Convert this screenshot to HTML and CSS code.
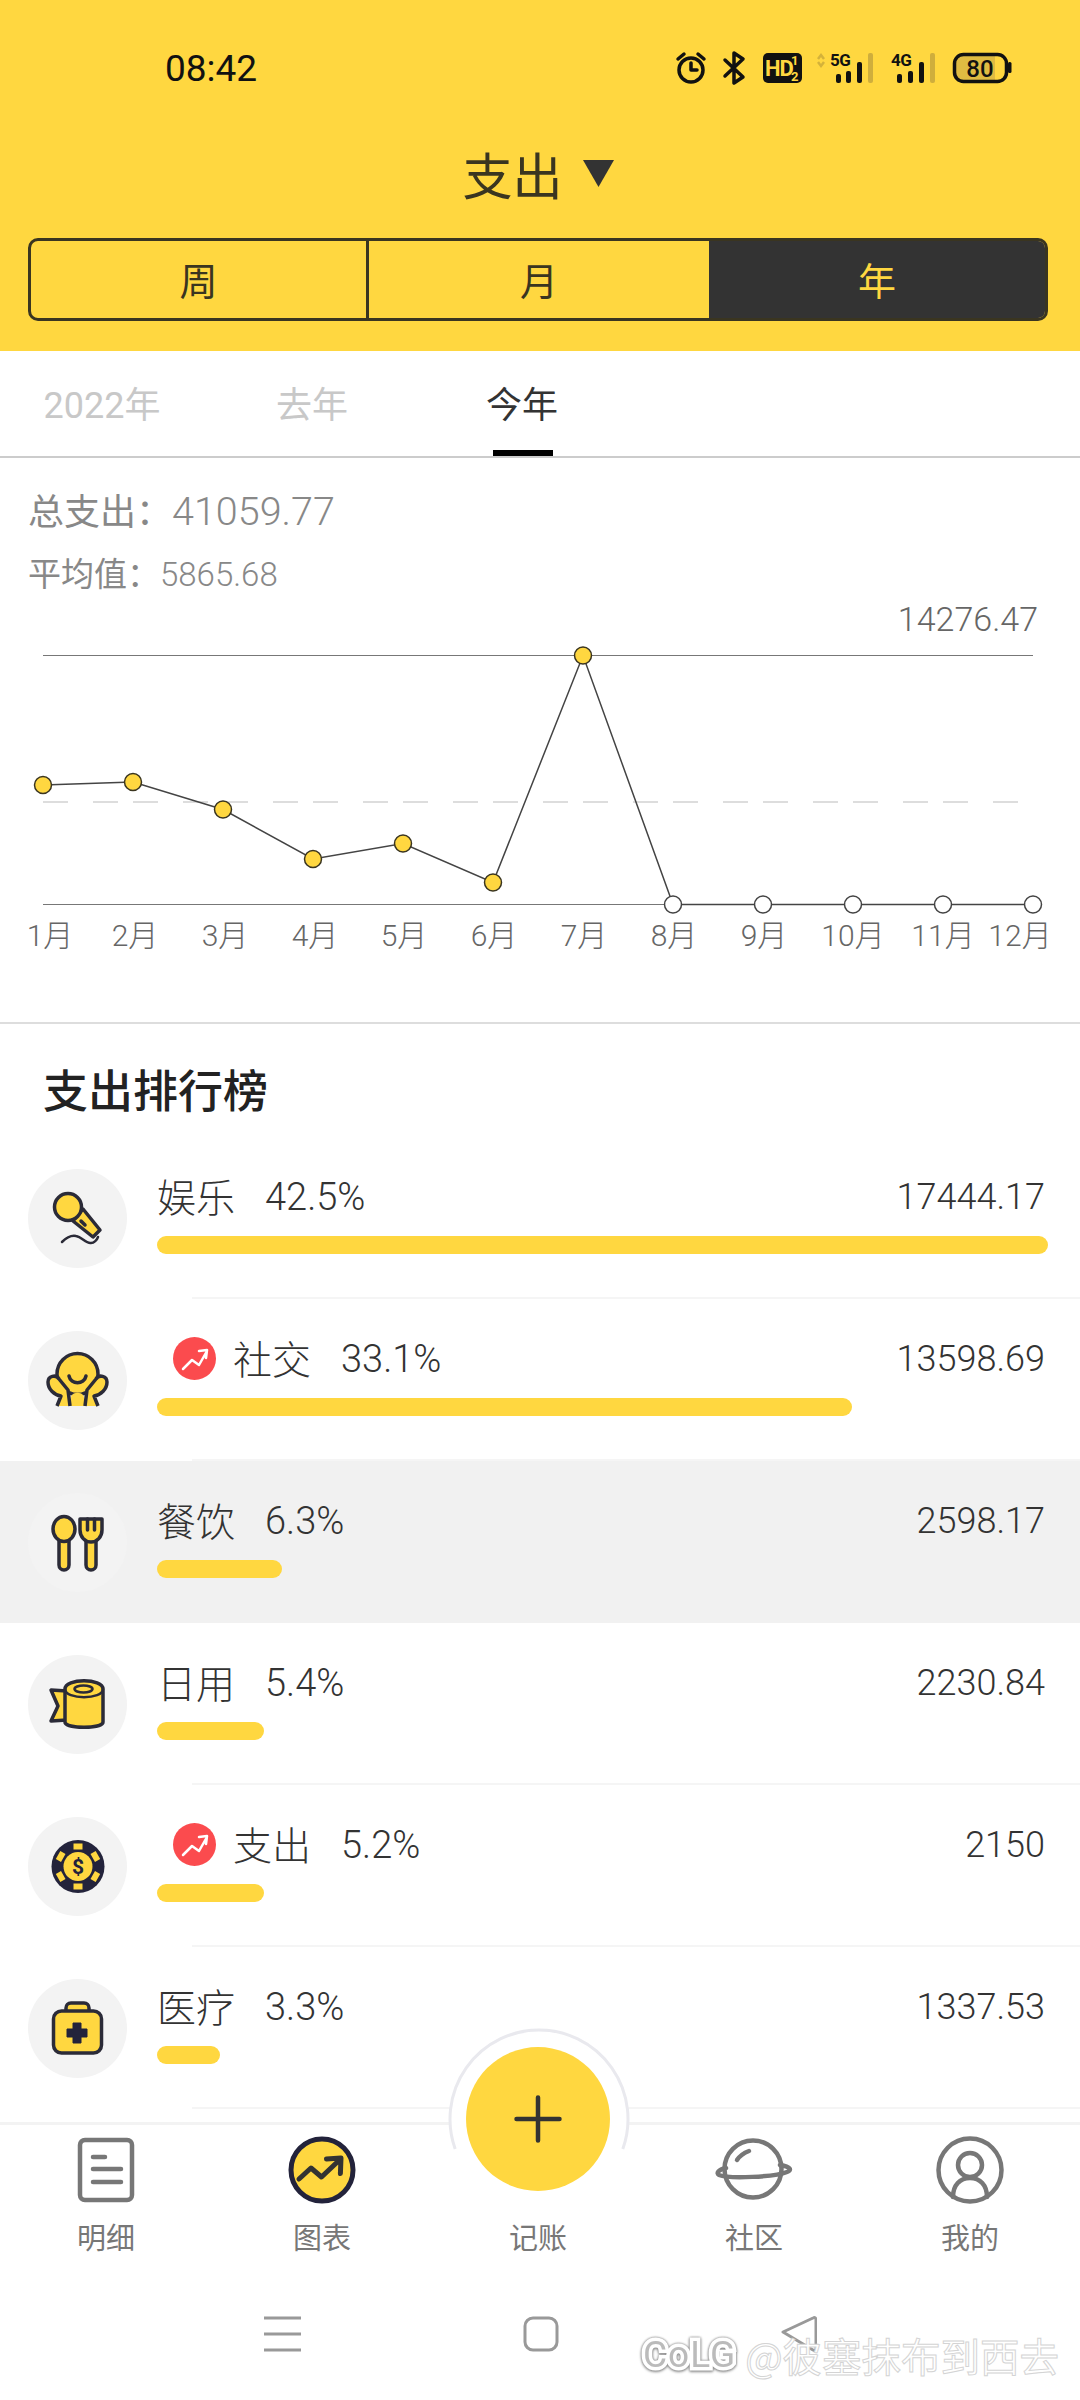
FILE: index.html
```html
<!DOCTYPE html>
<html lang="zh-CN">
<head>
<meta charset="utf-8">
<title>支出图表</title>
<link rel="stylesheet" href="styles.css">
</head>
<body>
<div class="page">
  <header class="header">
    <div class="status">
      <span class="time">08:42</span>
      <svg class="status-icons" viewBox="670 50 345 36" width="345" height="36">
        <g class="s-line">
          <circle cx="691" cy="70" r="12"/>
          <path d="M691 63v7h6"/>
          <path d="M678 59l6-5M704 59l-6-5"/>
          <path d="M725 60l18 17-9 6V53l9 6-18 17"/>
        </g>
        <rect x="763" y="53" width="39" height="30" rx="5" class="s-fill"/>
        <text x="765" y="76" class="s-hd">HD</text>
        <text x="791" y="65" class="s-hd-small">1</text>
        <text x="791" y="81" class="s-hd-small">2</text>
        <path d="M818 59l3-4 3 4M818 62l3 4 3-4" class="s-faint"/>
        <text x="830" y="66" class="s-net">5G</text>
        <rect x="836" y="74" width="5" height="9" rx="2" class="s-fill"/>
        <rect x="846" y="71" width="5" height="12" rx="2" class="s-fill"/>
        <rect x="857" y="62" width="5" height="21" rx="2" class="s-fill"/>
        <rect x="868" y="53" width="5" height="30" rx="2" class="s-dim"/>
        <text x="891" y="66" class="s-net">4G</text>
        <rect x="897" y="74" width="5" height="9" rx="2" class="s-fill"/>
        <rect x="908" y="71" width="5" height="12" rx="2" class="s-fill"/>
        <rect x="919" y="62" width="5" height="21" rx="2" class="s-fill"/>
        <rect x="930" y="53" width="5" height="30" rx="2" class="s-dim"/>
        <path d="M963 56h32v24h-32a8 8 0 0 1-8-8v-8a8 8 0 0 1 8-8z" class="s-level"/>
        <rect x="954.500" y="54.500" width="52" height="27" rx="9" class="s-batt"/>
        <rect x="1008" y="62" width="3.500" height="11" rx="1.500" class="s-fill"/>
        <text x="980" y="77" class="s-pct">80</text>
      </svg>
    </div>
    <div class="title">
      <span>支出</span>
      <svg class="caret" viewBox="0 0 31 27" width="31" height="27"><path d="M0 0h31L15.500 27z"/></svg>
    </div>
    <div class="segmented">
      <div class="seg">周</div>
      <div class="seg">月</div>
      <div class="seg seg-on">年</div>
    </div>
  </header>

  <nav class="periods">
    <div class="period">2022年</div>
    <div class="period">去年</div>
    <div class="period period-on">今年</div>
  </nav>

  <section class="summary">
    <div class="sum-total"><span class="sum-label">总支出：</span><span class="num">41059.77</span></div>
    <div class="sum-avg"><span class="sum-label2">平均值：</span><span class="num">5865.68</span></div>
  </section>

  <svg class="chart" viewBox="0 600 1080 422" width="1080" height="422">
    <text x="1038" y="631" class="c-max">14276.47</text>
    <path d="M43 655.500H1033M43 904.500H1033" class="c-axis"/>
    <path d="M43 802H1033" class="c-avg"/>
    <polyline points="43,785 133,782 223,809.500 313,859 403,843.500 493,882.500 583,655.500 673,904.500 763,904.500 853,904.500 943,904.500 1033,904.500" class="c-line"/>
    <g class="c-on">
      <circle cx="43" cy="785" r="8.500"/><circle cx="133" cy="782" r="8.500"/><circle cx="223" cy="809.500" r="8.500"/>
      <circle cx="313" cy="859" r="8.500"/><circle cx="403" cy="843.500" r="8.500"/><circle cx="493" cy="882.500" r="8.500"/>
      <circle cx="583" cy="655.500" r="8.500"/>
    </g>
    <g class="c-off">
      <circle cx="673" cy="904.500" r="8.500"/><circle cx="763" cy="904.500" r="8.500"/><circle cx="853" cy="904.500" r="8.500"/>
      <circle cx="943" cy="904.500" r="8.500"/><circle cx="1033" cy="904.500" r="8.500"/>
    </g>
    <g class="c-months">
      <text x="50" y="946">1月</text><text x="135" y="946">2月</text><text x="225" y="946">3月</text>
      <text x="315" y="946">4月</text><text x="404" y="946">5月</text><text x="494" y="946">6月</text>
      <text x="584" y="946">7月</text><text x="674" y="946">8月</text><text x="764" y="946">9月</text>
      <text x="853" y="946">10月</text><text x="943" y="946">11月</text><text x="1020" y="946">12月</text>
    </g>
  </svg>

  <section class="ranking">
    <h2 class="rank-title">支出排行榜</h2>

    <div class="row">
      <div class="cat">
        <svg viewBox="0 0 99 99" width="99" height="99">
          <path d="M45 52l10-12 17 21-7 7z" class="i-y"/>
          <circle cx="40" cy="38" r="13.500" class="i-y"/>
          <path d="M53 52l4 4" class="i-d"/>
          <path d="M34 73c5-5 9-7 14-6 6 1 10 8 15 7 3 0 6-3 7-6" class="i-t"/>
        </svg>
      </div>
      <div class="body">
        <div class="line"><span class="name">娱乐</span><span class="pct">42.5%</span><span class="val">17444.17</span></div>
        <div class="bar" style="width:891px"></div>
      </div>
    </div>

    <div class="row">
      <div class="cat">
        <svg viewBox="0 0 99 99" width="99" height="99">
          <circle cx="49.500" cy="43" r="20.500" class="i-y"/>
          <path d="M40 75l3-8c0-3 2-5 6.500-5s6.500 2 6.500 5l3 8z" class="i-f"/>
          <path d="M29 75l4-10c-7-1-13-7-13-14 0-6 8-8 11-3l9 11 2 16M70 75l-4-10c7-1 13-7 13-14 0-6-8-8-11-3l-9 11-2 16" class="i-y"/>
          <path d="M41 45c2 9 15 9 17 0" class="i-d"/>
        </svg>
      </div>
      <div class="body">
        <div class="line">
          <svg class="badge" viewBox="0 0 43 43" width="43" height="43">
            <circle cx="21.500" cy="21.500" r="21.500" class="b-c"/>
            <path d="M10 32l9-9 7 5 8-14M26 14l8-1-1 8" class="b-a"/>
          </svg>
          <span class="name">社交</span><span class="pct">33.1%</span><span class="val">13598.69</span>
        </div>
        <div class="bar" style="width:695px"></div>
      </div>
    </div>

    <div class="row row-on">
      <div class="cat">
        <svg viewBox="0 0 99 99" width="99" height="99">
          <path d="M31 47h10v25a5 5 0 0 1-10 0z" class="i-y"/>
          <ellipse cx="36" cy="36" rx="11" ry="12.500" class="i-y"/>
          <path d="M58 47h10v25a5 5 0 0 1-10 0z" class="i-y"/>
          <path d="M52 26h22v11c0 7-5 12-11 12s-11-5-11-12z" class="i-y"/>
          <path d="M59.500 26v11M66.500 26v11" class="i-d"/>
        </svg>
      </div>
      <div class="body">
        <div class="line"><span class="name">餐饮</span><span class="pct">6.3%</span><span class="val">2598.17</span></div>
        <div class="bar" style="width:125px"></div>
      </div>
    </div>

    <div class="row">
      <div class="cat">
        <svg viewBox="0 0 99 99" width="99" height="99">
          <path d="M23 35l16 1v29l-16 1 7-15z" class="i-y"/>
          <path d="M37 34c0-11 38-11 38 0v33c0 7-38 7-38 0z" class="i-y"/>
          <path d="M37 34c0 11 38 11 38 0" class="i-t"/>
          <ellipse cx="55.500" cy="34" rx="9" ry="3.500" class="i-t"/>
        </svg>
      </div>
      <div class="body">
        <div class="line"><span class="name">日用</span><span class="pct">5.4%</span><span class="val">2230.84</span></div>
        <div class="bar" style="width:107px"></div>
      </div>
    </div>

    <div class="row">
      <div class="cat">
        <svg viewBox="0 0 99 99" width="99" height="99">
          <circle cx="50" cy="49.500" r="26.500" class="c-dark"/>
          <g class="c-notch">
            <rect x="45.500" y="26.500" width="9" height="6"/>
            <rect x="45.500" y="66.500" width="9" height="6"/>
            <rect x="45.500" y="26.500" width="9" height="6" transform="rotate(60 50 49.500)"/>
            <rect x="45.500" y="26.500" width="9" height="6" transform="rotate(120 50 49.500)"/>
            <rect x="45.500" y="26.500" width="9" height="6" transform="rotate(240 50 49.500)"/>
            <rect x="45.500" y="26.500" width="9" height="6" transform="rotate(300 50 49.500)"/>
            <circle cx="50" cy="49.500" r="14.500"/>
          </g>
          <text x="50" y="57" class="c-dollar">$</text>
        </svg>
      </div>
      <div class="body">
        <div class="line">
          <svg class="badge" viewBox="0 0 43 43" width="43" height="43">
            <circle cx="21.500" cy="21.500" r="21.500" class="b-c"/>
            <path d="M10 32l9-9 7 5 8-14M26 14l8-1-1 8" class="b-a"/>
          </svg>
          <span class="name">支出</span><span class="pct">5.2%</span><span class="val">2150</span>
        </div>
        <div class="bar" style="width:107px"></div>
      </div>
    </div>

    <div class="row">
      <div class="cat">
        <svg viewBox="0 0 99 99" width="99" height="99">
          <path d="M38 33v-4c0-3 2-5 5-5h13c3 0 5 2 5 5v4" class="i-y"/>
          <rect x="25.500" y="32" width="48" height="42" rx="8" class="i-y"/>
          <path d="M45 44h8v6h6v8h-6v6h-8v-6h-6v-8h6z" class="i-cross"/>
        </svg>
      </div>
      <div class="body">
        <div class="line"><span class="name">医疗</span><span class="pct">3.3%</span><span class="val">1337.53</span></div>
        <div class="bar" style="width:63px"></div>
      </div>
    </div>
  </section>

  <footer class="dock">
    <svg class="ring" viewBox="0 0 184 130" width="184" height="130"><path d="M8.200 122A89 89 0 1 1 175.800 122"/></svg>
    <div class="fab">
      <svg viewBox="0 0 48 48" width="48" height="48"><path d="M2.500 24h43M24 2.500v43"/></svg>
    </div>
    <div class="tabs">
      <div class="tab">
        <svg viewBox="0 0 68 68" width="68" height="68" class="t-line">
          <rect x="8" y="4" width="52" height="60" rx="5"/>
          <path d="M21 21h12M21 33h28M21 46h28"/>
        </svg>
        <span>明细</span>
      </div>
      <div class="tab">
        <svg viewBox="0 0 68 68" width="68" height="68">
          <circle cx="34" cy="34" r="31" class="t-on"/>
          <path d="M11 43l12-11 10.500 9 19-18M38.500 23l14.500-1-.6 15.500" class="t-arrow"/>
        </svg>
        <span>图表</span>
      </div>
      <div class="tab">
        <div class="t-gap"></div>
        <span>记账</span>
      </div>
      <div class="tab">
        <svg viewBox="0 0 78 68" width="78" height="68" class="t-line">
          <circle cx="38" cy="33" r="28.500"/>
          <path d="M11 32c-8 2-10 5-7 7 10 4 56 2 68-3 5-2 4-5-7-7"/>
          <path d="M22 24q4-6 12-9"/>
        </svg>
        <span>社区</span>
      </div>
      <div class="tab">
        <svg viewBox="0 0 68 68" width="68" height="68" class="t-line">
          <circle cx="34" cy="34" r="31.500"/>
          <circle cx="34" cy="29" r="12"/>
          <path d="M17 61c0-12 7-19 17-19s17 7 17 19"/>
        </svg>
        <span>我的</span>
      </div>
    </div>
    <div class="sysnav">
      <svg viewBox="0 0 37 36" width="37" height="36" class="sys"><path d="M0 2h37M0 18h37M0 34h37"/></svg>
      <svg viewBox="0 0 36 36" width="36" height="36" class="sys"><rect x="2" y="2" width="32" height="32" rx="8"/></svg>
      <svg viewBox="0 0 36 36" width="36" height="36" class="sys"><path d="M2 16L32 2c2-1 3 0 3 2v28c0 2-1 3-3 2z" stroke-linejoin="round"/></svg>
    </div>
    <div class="mark"><span class="mark-logo">CoLG</span><span class="mark-text">@彼塞抹布到西去</span></div>
  </footer>
</div>
</body>
</html>
```
FILE: styles.css
```css
* { box-sizing: border-box; margin: 0; padding: 0; }
html, body { background: #fff; }
body { font-family: "Roboto", "Noto Sans CJK SC", sans-serif; }
.page { position: relative; width: 1080px; height: 2400px; overflow: hidden; background: #fff; color: #333; }

/* header */
.header { height: 351px; background: #ffd740; padding: 0 32px 30px 28px; }
.status { height: 136px; display: flex; align-items: center; justify-content: space-between; padding-left: 137px; margin-right: -33px; }
.time { font-size: 37px; color: #111; }
.status-icons { margin-right: 66px; display: block; }
.s-line { fill: none; stroke: #111; stroke-width: 3.5; stroke-linejoin: round; stroke-linecap: round; }
.s-fill { fill: #111; }
.s-dim { fill: #cfae3c; }
.s-faint { fill: none; stroke: #d4b23a; stroke-width: 2.5; }
.s-hd { font: 700 22px "Roboto", sans-serif; fill: #ffd740; letter-spacing: -1px; }
.s-hd-small { font: 700 13px "Roboto", sans-serif; fill: #ffd740; }
.s-net { font: 700 17px "Roboto", sans-serif; fill: #111; letter-spacing: -.5px; }
.s-level { fill: #dfbb42; }
.s-batt { fill: none; stroke: #111; stroke-width: 3.500; }
.s-pct { font: 500 24px "Roboto", sans-serif; fill: #111; text-anchor: middle; }

.title { height: 64px; margin-top: 8px; display: flex; justify-content: center; font: 400 50px/58px "Noto Sans CJK SC", sans-serif; color: #3a3520; }
.caret { margin: 16px 0 0 20px; display: block; }
.caret path { fill: #333; }

.segmented { display: grid; grid-template-columns: 338px 340px 1fr; height: 83px; margin-top: 30px; border: 3px solid #3a3520; border-radius: 10px; overflow: hidden; }
.seg { display: flex; align-items: center; justify-content: center; padding-bottom: 3px; font: 400 38px "Noto Sans CJK SC", sans-serif; color: #3a3520; border-right: 3px solid #3a3520; }
.seg:nth-child(2) { border-right: 0; }
.seg-on { background: #333; color: #ffd740; border-right: 0; }

/* period tabs */
.periods { display: flex; height: 107px; border-bottom: 2px solid #ccc; }
.period { width: 210px; text-align: center; font: 400 36px/110px "Roboto", "Noto Sans CJK SC", sans-serif; color: #c8c8c8; position: relative; }
.period:first-child { margin-left: -3px; }
.period-on { color: #333; }
.period-on::after { content: ""; position: absolute; left: 76px; bottom: 0; width: 60px; height: 6px; background: #000; }

/* summary */
.summary { height: 142px; padding: 26px 0 0 28px; color: #888; }
.num { font-weight: 300; }
.sum-total { font-size: 39.500px; line-height: 50px; }
.sum-label { font-size: 36px; font-family: "Noto Sans CJK SC", sans-serif; }
.sum-label2 { font-size: 33px; font-family: "Noto Sans CJK SC", sans-serif; }
.sum-avg { font-size: 33px; line-height: 50px; margin-top: 10px; }

/* chart */
.chart { display: block; }
.c-max { font-size: 34px; font-weight: 300; fill: #666; text-anchor: end; }
.c-axis { fill: none; stroke: #777; stroke-width: 1; }
.c-avg { fill: none; stroke: #ddd; stroke-width: 2; stroke-dasharray: 25 25 25 15; }
.c-line { fill: none; stroke: #444; stroke-width: 1.500; }
.c-on circle { fill: #ffd740; stroke: #3a3520; stroke-width: 1.500; }
.c-off circle { fill: #fff; stroke: #444; stroke-width: 1.500; }
.c-months text { font-size: 30px; font-weight: 300; fill: #666; text-anchor: middle; }

/* ranking */
.ranking { border-top: 2px solid #ddd; }
.rank-title { height: 113px; padding: 41px 0 0 43px; font: 500 45px/48px "Noto Sans CJK SC", sans-serif; color: #222; }
.row { height: 162px; display: flex; align-items: center; padding: 0 32px 0 28px; gap: 30px; background: linear-gradient(#f5f5f5, #f5f5f5) 192px 100% / 100% 2px no-repeat; }
.row-on { background: #f1f1f1; }
.cat { width: 99px; height: 99px; border-radius: 50%; background: #f3f3f3; flex: none; }
.cat svg { display: block; }
.body { flex: 1; align-self: flex-start; margin-top: 34px; }
.line { height: 50px; display: flex; align-items: center; }
.name { font: 300 39px/50px "Noto Sans CJK SC", sans-serif; color: #333; margin-right: 30px; padding-bottom: 3px; }
.pct { font-size: 38px; font-weight: 300; color: #333; padding-top: 2px; }
.val { margin-left: auto; margin-right: 3px; font-size: 36px; font-weight: 300; color: #333; padding-top: 2px; }
.badge { margin: 0 17px 0 16px; flex: none; }
.bar { height: 18px; border-radius: 9px; background: #ffd740; margin-top: 15px; }

.i-y { fill: #ffd740; stroke: #2b2b38; stroke-width: 3.500; stroke-linejoin: round; }
.i-f { fill: #ffd740; }
.i-d { fill: none; stroke: #2b2b38; stroke-width: 3.500; stroke-linecap: round; }
.i-t { fill: none; stroke: #2b2b38; stroke-width: 2.500; stroke-linecap: round; }
.i-cross { fill: #23233b; stroke: #23233b; stroke-width: 1; stroke-linejoin: round; }
.c-dark { fill: #23233b; }
.c-notch { fill: #ffd740; }
.c-dollar { font: 700 21px "Roboto", sans-serif; fill: #23233b; text-anchor: middle; }
.b-c { fill: #fb4b4e; }
.b-a { fill: none; stroke: #fff; stroke-width: 2.500; stroke-linecap: round; stroke-linejoin: round; }

/* dock */
.dock { position: absolute; left: 0; top: 2122px; width: 1080px; height: 278px; background: #fff; border-top: 3px solid #f3f3f3; }
.ring { position: absolute; left: 447px; top: -98px; }
.ring path { fill: #fff; stroke: #e9e9ee; stroke-width: 3; }
.fab { position: absolute; left: 466px; top: -78px; width: 144px; height: 144px; border-radius: 50%; background: #ffd740; display: flex; align-items: center; justify-content: center; }
.fab svg { display: block; }
.fab path { fill: none; stroke: #333; stroke-width: 4.500; stroke-linecap: round; }
.tabs { display: flex; width: 1080px; padding-top: 11px; margin-left: -2px; }
.tab { flex: 1; display: flex; flex-direction: column; align-items: center; font: 400 29px/32px "Noto Sans CJK SC", sans-serif; color: #777; }
.tab svg { display: block; height: 68px; margin-bottom: 16px; }
.t-gap { height: 84px; }
.t-line { fill: none; stroke: #777; stroke-width: 4.500; stroke-linecap: round; }
.t-on { fill: #ffd740; stroke: #23233b; stroke-width: 5; }
.t-arrow { fill: none; stroke: #333; stroke-width: 5; stroke-linecap: round; stroke-linejoin: round; }

.sysnav { display: flex; justify-content: center; gap: 222px; margin-top: 64px; }
.sys { display: block; fill: none; stroke: #999; stroke-width: 3; }

.mark { position: absolute; right: 21px; top: 208px; display: flex; align-items: center; gap: 9px; }
.mark-logo { font: 400 37px/44px "Roboto", sans-serif; color: #bbb; -webkit-text-stroke: 7px #fff; paint-order: stroke fill; letter-spacing: 1px; filter: drop-shadow(0 0 1px #888) drop-shadow(0 1px 1px #999); }
.mark-text { font: 400 39.500px/44px "Noto Sans CJK SC", sans-serif; color: #fff; -webkit-text-stroke: 1px #d4d4d4; }
```
